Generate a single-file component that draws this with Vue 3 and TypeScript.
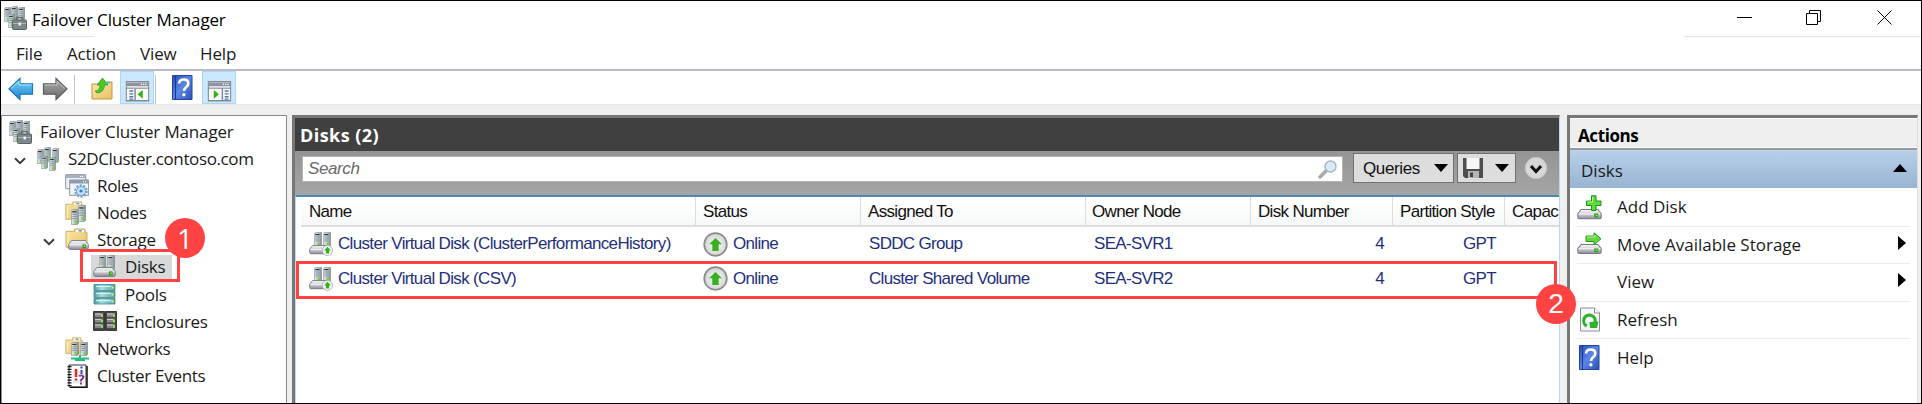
<script setup lang="ts">
interface TreeNode { label: string; icon: string; level: number; open?: boolean; selected?: boolean }
interface DiskRow { name: string; owner: string; assigned: string; disk: number; style: string; marked?: boolean }
interface ActionItem { label: string; icon?: string; submenu?: boolean }

const menus = ['File', 'Action', 'View', 'Help']
const tree: TreeNode[] = [
  { label: 'Failover Cluster Manager', icon: 'manager', level: 0 },
  { label: 'S2DCluster.contoso.com', icon: 'cluster', level: 1, open: true },
  { label: 'Roles', icon: 'roles', level: 2 },
  { label: 'Nodes', icon: 'nodes', level: 2 },
  { label: 'Storage', icon: 'storage', level: 2, open: true },
  { label: 'Disks', icon: 'disks', level: 3, selected: true },
  { label: 'Pools', icon: 'pools', level: 3 },
  { label: 'Enclosures', icon: 'enclosures', level: 3 },
  { label: 'Networks', icon: 'networks', level: 2 },
  { label: 'Cluster Events', icon: 'events', level: 2 },
]
const columns = ['Name', 'Status', 'Assigned To', 'Owner Node', 'Disk Number', 'Partition Style', 'Capac']
const disks: DiskRow[] = [
  { name: 'Cluster Virtual Disk (ClusterPerformanceHistory)', assigned: 'SDDC Group', owner: 'SEA-SVR1', disk: 4, style: 'GPT' },
  { name: 'Cluster Virtual Disk (CSV)', assigned: 'Cluster Shared Volume', owner: 'SEA-SVR2', disk: 4, style: 'GPT', marked: true },
]
const actions: ActionItem[] = [
  { label: 'Add Disk', icon: 'add' },
  { label: 'Move Available Storage', icon: 'move', submenu: true },
  { label: 'View', submenu: true },
  { label: 'Refresh', icon: 'refresh' },
  { label: 'Help', icon: 'help' },
]
</script>

<template>
  <div class="window">
    <svg class="defs" aria-hidden="true">
      <defs>
        <linearGradient id="metal" x1="0" x2="1" y1="0" y2="0"><stop offset="0" stop-color="#e3ebef" /><stop offset=".6" stop-color="#b3c0c6" /><stop offset="1" stop-color="#7b888e" /></linearGradient>
        <linearGradient id="drive" x1="0" x2="0" y1="0" y2="1"><stop offset="0" stop-color="#f7f7fa" /><stop offset=".5" stop-color="#cfcfd8" /><stop offset="1" stop-color="#8a8a94" /></linearGradient>
        <linearGradient id="folder" x1="0" x2="1" y1="0" y2="1"><stop offset="0" stop-color="#fbe9a8" /><stop offset="1" stop-color="#e6c066" /></linearGradient>
        <linearGradient id="blue" x1="0" x2="0" y1="0" y2="1"><stop offset="0" stop-color="#7fd0fa" /><stop offset="1" stop-color="#1a86d0" /></linearGradient>
        <linearGradient id="grey" x1="0" x2="0" y1="0" y2="1"><stop offset="0" stop-color="#aaa" /><stop offset="1" stop-color="#6c6c6c" /></linearGradient>
        <linearGradient id="book" x1="0" x2="1" y1="0" y2="1"><stop offset="0" stop-color="#2450b8" /><stop offset=".5" stop-color="#5b86e4" /><stop offset="1" stop-color="#2c4fb4" /></linearGradient>
        <linearGradient id="teal" x1="0" x2="1" y1="0" y2="0"><stop offset="0" stop-color="#4c9ba2" /><stop offset=".35" stop-color="#a4dde0" /><stop offset="1" stop-color="#57a3aa" /></linearGradient>
        <radialGradient id="disc"><stop offset="0" stop-color="#fff" /><stop offset="1" stop-color="#d2d2d2" /></radialGradient>
      </defs>
      <symbol id="server" viewBox="0 0 8 15" preserveAspectRatio="none">
        <path d="M.4 1.4 2 .4h5.6v13L6.3 14.6H.4z" fill="url(#metal)" stroke="#7b868b" stroke-width=".6" />
        <path d="M1.2 2.6h4.2" stroke="#27383d" stroke-width="1.2" /><path d="M1.2 5h4.2M1.2 7h4.2M1.2 9h4.2" stroke="#7d8c92" stroke-width=".8" />
        <path d="M3.6 11h2.6v2.4H3.6z" fill="#69d52d" />
      </symbol>
      <symbol id="drivebox" viewBox="0 0 24 11" preserveAspectRatio="none">
        <path d="M4 .6h16l3.200 4.200v4q0 1.600-1.800 1.600H2.600Q.8 10.400.8 8.800v-4z" fill="url(#drive)" stroke="#77777f" />
        <path d="M1.500 5.200h21" stroke="#fff" stroke-width=".8" /><path d="M16.500 4.800h4v4.200h-4z" fill="#2f9e22" /><path d="M18 6h1.600v1.600H18z" fill="#92f05c" />
      </symbol>
      <symbol id="folderbox" viewBox="0 0 24 24" preserveAspectRatio="none">
        <path d="M1 3.500h8.500V1H20v3.500h2V20H1z" fill="url(#folder)" stroke="#c8a45c" stroke-width=".9" /><path d="M11 2h8v2h-8z" fill="#fff" /><path d="M13.500 2h3.500v1.700h-3.500z" fill="#4aa3e0" /><path d="M3 5v14" stroke="#fff3c8" />
      </symbol>
      <symbol id="manager" viewBox="0 0 24 24">
        <use href="#server" x="1" y="1" width="7" height="15" /><use href="#server" x="8" y="0" width="7" height="15" /><use href="#server" x="15" y="1" width="7" height="14" /><use href="#server" x="5" y="8" width="7" height="14" />
        <path d="M13.500 14.500v-3h6v3" fill="none" stroke="#666c70" stroke-width="1.500" /><rect x="9.500" y="14" width="14" height="9.500" rx="1" fill="#7c878c" stroke="#5a6468" /><path d="M10 17.500h13" stroke="#aeb8bc" /><path d="M15.500 16.500h2.500v3h-2.500z" fill="#eee" />
      </symbol>
      <symbol id="cluster" viewBox="0 0 24 24">
        <use href="#server" x="1" y="2" width="7" height="15" /><use href="#server" x="8" y="0" width="7" height="15" /><use href="#server" x="16" y="1" width="7" height="15" /><use href="#server" x="5" y="9" width="7" height="13" /><use href="#server" x="13" y="10" width="7" height="14" />
      </symbol>
      <symbol id="roles" viewBox="0 0 24 24">
        <path d="M.7.7h20v14H.7z" fill="#eef1f5" stroke="#8793a2" /><path d="M1 1h19.500v3H1z" fill="#a8b3c1" /><path d="M4.700 6h19v15.300h-19z" fill="#f2f5f8" stroke="#8793a2" /><path d="M5 6h18.500v3.500H5z" fill="#8c9bad" /><path d="M15 2.500h4M18 7.700h4" stroke="#fff" stroke-dasharray="1.200 .8" />
        <circle cx="16" cy="17" r="5.800" fill="none" stroke="#6ca6d2" stroke-width="2" stroke-dasharray="2.200 1.400" /><circle cx="16" cy="17" r="4.500" fill="#c5e1f4" stroke="#6ba3d0" /><circle cx="16" cy="17" r="1.600" fill="#367eb5" />
      </symbol>
      <symbol id="nodes" viewBox="0 0 24 24"><use href="#folderbox" width="20" height="22" /><use href="#server" x="6" y="8" width="8" height="16" /><use href="#server" x="13" y="4" width="8" height="17" /></symbol>
      <symbol id="storage" viewBox="0 0 24 24"><use href="#folderbox" width="24" height="23" /><use href="#drivebox" x="3" y="12" width="21" height="10" /></symbol>
      <symbol id="disks" viewBox="0 0 24 24"><use href="#server" x="6" y="0" width="7" height="15" /><use href="#server" x="14" y="0" width="8" height="15" /><use href="#drivebox" x="0" y="12" width="23" height="10" /></symbol>
      <symbol id="diskup" viewBox="0 0 24 24">
        <use href="#server" x="5" y="0" width="8" height="15" /><use href="#server" x="14" y="0" width="8" height="15" /><use href="#drivebox" x="0" y="13" width="22" height="9.500" /><circle cx="18.500" cy="18.500" r="5" fill="#f7f7f7" stroke="#aaa" stroke-width=".8" /><path d="m18.500 14.800 3.400 3.700h-1.800v3h-3.200v-3h-1.800z" fill="#35ae20" />
      </symbol>
      <symbol id="pools" viewBox="0 0 24 24">
        <g stroke="#43868c" stroke-width=".8" fill="url(#teal)"><path d="M1 1.500h21v6H1zM1 8.500h21v6H1zM1 15.500h21v5.500H1z" /></g><path d="M3 3.500h15M3 10.500h15M3 17.500h15" stroke="#d8f6f6" stroke-width="1.200" /><path d="M18.500 4.500h2M18.500 11.500h2M18.500 18.500h2" stroke="#e5f850" stroke-width="1.800" />
      </symbol>
      <symbol id="enclosures" viewBox="0 0 24 24">
        <path d="M.5 1.500h11v19H.5zM12.500 1.500h11v19h-11z" fill="#484848" stroke="#383838" /><path d="M2 5h8M2 10.500h8M2 16h8M14 5h8M14 10.500h8M14 16h8" stroke="#868686" stroke-width="4" /><path d="M2 4h6M2 9.500h6M2 15h6M14 4h6M14 9.500h6M14 15h6" stroke="#ccc" /><path d="M8 5.500h2M8 11h2M8 16.500h2M20 5.500h2M20 11h2M20 16.500h2" stroke="#9de34c" stroke-width="2.500" />
      </symbol>
      <symbol id="networks" viewBox="0 0 24 24"><use href="#folderbox" width="19" height="20" /><use href="#server" x="6" y="5" width="8" height="14" /><use href="#server" x="15" y="5" width="8" height="14" /><path d="M6 21.500h18M15 18v5" stroke="#2eb980" stroke-width="2" /><path d="M10 22.500h10" stroke="#2eb980" stroke-width="3" /></symbol>
      <symbol id="events" viewBox="0 0 24 24">
        <path d="M4 1h17v22H4z" fill="#fff" stroke="#333" /><path d="M22 2v21.500H5" fill="none" stroke="#111" stroke-width="1.500" /><path d="M4.500 2v21" stroke="#111" stroke-width="4" stroke-dasharray="1.200 1.500" /><path d="M11 5v8M11 14.500v2" stroke="#ee1212" stroke-width="2.400" /><path d="M16.500 2.500v2M16.500 6v4" stroke="#2736d4" stroke-width="2" /><path d="M14 12q3-1.500 4.500.5-.5 2.500-2.500 3.500v1.500M16 18.500v2" fill="none" stroke="#76208a" stroke-width="1.800" /><path d="M8 8h11M8 11h11M8 18h11" stroke="#aaa" stroke-width=".5" />
      </symbol>
      <symbol id="add" viewBox="0 0 25 25"><use href="#drivebox" y="14" width="25" height="10.500" /><path d="M14.500.8h4.500V6h5v4.500h-5v5h-4.500v-5h-5V6h5z" fill="#63d83c" stroke="#169612" /><path d="M15.500 2v5h-5" stroke="#b8f59c" fill="none" /></symbol>
      <symbol id="move" viewBox="0 0 25 25"><use href="#drivebox" y="12" width="25" height="10" /><path d="M9 4h8V.8l7 6-7 6V9.500H9z" fill="#68d441" stroke="#21a01c" /><path d="M10 5h8V3" stroke="#b5ef9b" fill="none" /></symbol>
      <symbol id="refresh" viewBox="0 0 25 25"><path d="M3.500 1h14l5 5v18h-19z" fill="#f5f6fa" stroke="#8d8d93" /><path d="M17.500 1v5h5" fill="#fff" stroke="#8d8d93" /><path d="M9.800 19a5.800 5.800 0 1 1 8.200-3.500" fill="none" stroke="#2eb22c" stroke-width="3.200" /><path d="m12.500 15 9-.5-1.500 6.500h-7z" fill="#2eb22c" /></symbol>
      <symbol id="help" viewBox="0 0 25 25"><path d="M2.500.5h19.500v24H2.500z" fill="url(#book)" stroke="#2443a0" /><path d="M5.500.5v24" stroke="#173996" /><path d="M9 8.500q.3-4 4.700-4 4.600 0 4.600 4 0 2.300-2.300 3.800-2 1.300-2 3.700" fill="none" stroke="#fff" stroke-width="2.700" /><circle cx="13.900" cy="19.800" r="1.700" fill="#fff" /></symbol>
      <symbol id="back" viewBox="0 0 26 24"><path d="M1 12 12 1.500v5.300h12.500v10.400H12v5.300z" fill="url(#blue)" stroke="#1778bb" stroke-width="1.200" /><path d="m3 11.500 8-7.500v4h12.500" fill="none" stroke="#b5e5ff" /></symbol>
      <symbol id="forward" viewBox="0 0 26 24"><path d="M25 12 14 1.500v5.300H1.500v10.400H14v5.300z" fill="url(#grey)" stroke="#5e5e5e" stroke-width="1.200" /><path d="m23 11.500-8-7.500v4H2.500" fill="none" stroke="#c5c5c5" /></symbol>
      <symbol id="up" viewBox="0 0 24 24"><path d="M2 7h7l1.500-2H22v17H2z" fill="url(#folder)" stroke="#c39737" /><path d="M12 5h8v2h-8z" fill="#fff" /><path d="M17 5h3v1.500h-3z" fill="#4aa3e0" /><path d="M5 14q5 0 5-6H7l5.500-7L18 8h-3.500Q14 15.500 7 16z" fill="#49cb26" stroke="#299117" stroke-width=".7" /></symbol>
      <symbol id="pane" viewBox="0 0 25 22"><path d="M.7.7h23.600v20H.7z" fill="#f9f9fa" stroke="#858b94" stroke-width="1.400" /><path d="M1.500 3.500h22" stroke="#8d949f" stroke-width="4" /><path d="M16 3.500h6" stroke="#fff" stroke-width="1.500" stroke-dasharray="1.300 1" /><path d="M1 7.500h23" stroke="#707985" /></symbol>
      <symbol id="treepane" viewBox="0 0 25 22"><use href="#pane" width="25" height="22" /><path d="M10 8v13" stroke="#818791" stroke-width="1.500" /><path d="M4 10.500h4M4 13.500h4M4 16.500h4M4 19h4" stroke="#4777ad" stroke-width="1.400" /><path d="M18 9.500v9L12.500 14z" fill="#35b21b" /></symbol>
      <symbol id="actionpane" viewBox="0 0 25 22"><use href="#pane" width="25" height="22" /><path d="M15.500 8v13" stroke="#818791" stroke-width="1.500" /><path d="M18 10.500h4M18 13.500h4M18 16.500h4M18 19h4" stroke="#4777ad" stroke-width="1.400" /><path d="M6.500 9.500v9l5.500-4.500z" fill="#35b21b" /></symbol>
    </svg>

    <header class="titlebar">
      <svg class="icon"><use href="#manager" /></svg>
      <span class="title">Failover Cluster Manager</span>
      <svg class="controls" viewBox="0 0 160 20" fill="none" stroke="#000"><path d="M1 10.500h15" /><path d="M70.500 6.500h11v11h-11zM73.500 6V3.500h11v11H82M141.500 3.500l14 14M155.500 3.500l-14 14" /></svg>
    </header>
    <div class="rules"><i></i><i></i></div>
    <nav class="menubar"><span v-for="m in menus" :key="m">{{ m }}</span></nav>
    <div class="toolbar">
      <svg class="tool arrow"><use href="#back" /></svg>
      <svg class="tool arrow next"><use href="#forward" /></svg>
      <i class="divider"></i>
      <svg class="tool folder"><use href="#up" /></svg>
      <span class="toggle"><svg><use href="#treepane" /></svg></span>
      <i class="divider tight"></i>
      <svg class="tool book"><use href="#help" /></svg>
      <span class="toggle"><svg><use href="#actionpane" /></svg></span>
    </div>

    <main class="body">
      <aside class="tree">
        <div v-for="n in tree" :key="n.label" class="node" :class="['level' + n.level, { selected: n.selected }]">
          <span class="twist"><svg v-if="n.open" viewBox="0 0 12 8"><path d="m1 1.200 5 5 5-5" fill="none" stroke="#3c3c3c" stroke-width="2" /></svg></span>
          <span class="entry"><svg class="icon"><use :href="'#' + n.icon" /></svg><span class="label">{{ n.label }}</span></span>
          <template v-if="n.selected"><span class="marker"></span><span class="badge first">1</span></template>
        </div>
      </aside>

      <section class="content">
        <h2>Disks (2)</h2>
        <div class="searchbar">
          <div class="search"><span>Search</span><svg viewBox="0 0 20 20"><path d="m2 18 6-6" stroke="#aaa" stroke-width="3.500" stroke-linecap="round" /><circle cx="12.500" cy="7.500" r="5.500" fill="#d7ecf9" stroke="#a9b7c2" stroke-width="1.500" /></svg></div>
          <button class="queries">Queries<i class="caret"></i></button>
          <button class="save"><svg viewBox="0 0 20 20"><path d="M0 0h20v20H2l-2-2z" fill="#4d4d4d" /><path d="M3.500 0h13v11h-13z" fill="#f6f6f6" /><path d="M5 13h11v7H5z" fill="#b5b5b5" /><path d="M7 14.500h3V19H7z" fill="#444" /></svg><i class="caret"></i></button>
          <svg class="expand" viewBox="0 0 24 24"><circle cx="12" cy="12" r="10.700" fill="#d7d7d7" stroke="#c4c4c4" /><path d="m7 10 5 5.500 5-5.500" fill="none" stroke="#111" stroke-width="3" /></svg>
        </div>
        <div class="table">
          <div class="row head"><span v-for="c in columns" :key="c">{{ c }}</span></div>
          <div v-for="d in disks" :key="d.name" class="row">
            <span class="name"><svg class="icon"><use href="#diskup" /></svg>{{ d.name }}</span>
            <span class="status"><svg viewBox="0 0 25 25"><circle cx="12.500" cy="12.500" r="11.300" fill="url(#disc)" stroke="#8b8b8b" stroke-width="1.700" /><path d="m12.500 6 6.500 6.300h-3.300V19H9.300v-6.700H6z" fill="#38b01f" /></svg>Online</span>
            <span>{{ d.assigned }}</span><span>{{ d.owner }}</span><span class="num">{{ d.disk }}</span><span class="num style">{{ d.style }}</span><span></span>
            <template v-if="d.marked"><i class="marker"></i><i class="badge second">2</i></template>
          </div>
        </div>
      </section>

      <aside class="actions">
        <h3>Actions</h3>
        <div class="group">Disks<svg viewBox="0 0 14 8"><path d="M0 8 7 0l7 8z" /></svg></div>
        <ul>
          <li v-for="a in actions" :key="a.label">
            <span class="slot"><svg v-if="a.icon"><use :href="'#' + a.icon" /></svg></span>{{ a.label }}
            <svg v-if="a.submenu" class="sub" viewBox="0 0 8 14"><path d="M0 0l8 7-8 7z" /></svg>
          </li>
        </ul>
      </aside>
    </main>
  </div>
</template>

<style>
body { margin: 0; overflow: hidden; }
</style>
<style scoped>
.window { box-sizing: border-box; width: 1922px; height: 404px; border: 1px solid #000; background: #fff; display: flex; flex-direction: column; overflow: hidden; font: 17px/24px "Open Sans", "Noto Sans", sans-serif; color: #1a1a1a; }
.window * { box-sizing: border-box; }
.defs { position: absolute; width: 0; height: 0; }
.icon { width: 24px; height: 24px; flex: none; }
.titlebar { height: 35px; flex: none; display: flex; align-items: flex-start; padding: 5px 25px 0 2px; }
.title { margin: 2px 0 0 5px; color: #000; letter-spacing: -.15px; }
.controls { width: 160px; height: 20px; margin: 1px 0 0 auto; }
.rules { display: flex; justify-content: space-between; height: 1px; flex: none; }
.rules i { width: 93px; background: #e4e4e4; }
.rules i:last-child { width: 237px; }
.menubar { height: 34px; flex: none; border-bottom: 2px solid #bcbcc2; padding: 5px 0 0 15px; display: flex; }
.menubar span { width: 73px; letter-spacing: -.15px; }
.menubar span:first-child { width: 51px; }
.menubar span:nth-child(3) { width: 60px; }
.toolbar { height: 33px; flex: none; display: flex; align-items: center; padding-left: 7px; }
.tool.arrow { width: 26px; height: 24px; margin-top: 3px; }
.tool.next { margin-left: 8px; }
.tool.folder { width: 24px; height: 24px; margin: 2px 6px 0 15px; }
.tool.book { width: 25px; height: 25px; margin: 0 7px 0 14px; }
.divider { width: 1px; height: 29px; background: #c2c2c2; margin: 3px 0 0 6px; }
.divider.tight { margin-left: 1px; }
.toggle { width: 34px; height: 33px; background: #cce8ff; border: 1px solid #a9d7fa; padding: 9px 0 0 4px; }
.toggle svg { display: block; width: 25px; height: 21px; }
.body { flex: 1; display: flex; min-height: 0; background: #efefef; padding-top: 10px; border-top: 1px solid #e6e6e6; }

.tree { width: 286px; flex: none; background: #fff; border: solid #868b94; border-width: 1px 1px 0 1px; padding-top: 4px; }
.node { height: 27.1px; display: flex; position: relative; }
.twist { width: 21px; display: flex; justify-content: flex-end; flex: none; }
.twist svg { width: 12px; height: 8px; margin-top: 10px; }
.entry { display: flex; }
.entry .label { padding-left: 8px; letter-spacing: -.3px; }
.level0 .twist { width: 6px; padding: 0; }
.level0 .label { letter-spacing: -.15px; }
.level1 .twist { width: 34px; padding-right: 10px; }
.level1 .label { letter-spacing: -.38px; }
.level2 .twist { width: 63px; padding-right: 10px; }
.level3 .twist { width: 89px; }
.level3 .entry { height: 25px; padding: 0 7px 0 2px; }
.selected .entry { background: #d9d9d9; width: 81px; }
.node .marker { position: absolute; left: 78px; top: -6px; width: 100px; height: 33px; border: 3px solid #ff4242; }
.badge { position: absolute; width: 40px; height: 40px; border-radius: 50%; background: #ff4242; color: #fff; font: 28px/40px "Liberation Sans", Arial, sans-serif; letter-spacing: 0; text-align: center; z-index: 3; }
.first { left: 163px; top: -37px; font-family: "Open Sans", sans-serif; }

.content { width: 1268px; flex: none; margin-left: 5px; border: solid #777; border-width: 3px 0 0 3px; border-right: 1px solid #b9d8ec; display: flex; flex-direction: column; background: #fff; }
h2 { margin: 0; height: 33px; flex: none; background: #404040; color: #fff; font: bold 18px/34px "Open Sans", sans-serif; letter-spacing: .45px; padding-left: 5px; }
.searchbar { height: 44px; flex: none; background: linear-gradient(#949494, #a5a5a5); display: flex; padding: 2px 12px 0 7px; font-family: "Liberation Sans", sans-serif; }
.search { width: 1041px; height: 26px; margin: 3px 10px 0 0; background: #fff; border: 1px solid #b4b4bd; display: flex; flex: none; justify-content: space-between; padding: 0 4px 0 5px; font-style: italic; color: #6a6a6a; letter-spacing: -.4px; }
.search svg { width: 20px; height: 20px; margin-top: 2px; }
button { height: 30px; flex: none; margin: 0 3px 0 0; border: 1px solid #707070; background: #ddd; font: 17px/27px "Liberation Sans", sans-serif; letter-spacing: -.36px; display: flex; align-items: center; justify-content: space-between; color: #111; }
.queries { width: 101px; padding: 0 5px 0 9px; }
.save { width: 59px; padding: 0 6px 0 5px; }
.save svg { width: 20px; height: 20px; }
.caret { border: 7px solid transparent; border-top: 8px solid #000; border-bottom: 0; }
.expand { width: 24px; height: 24px; flex: none; margin: 3px 0 0 5px; }
.table { flex: 1; border-top: 2px solid #4b8ab8; border-left: 1px solid #b9d8ec; padding-left: 5px; font-family: "Liberation Sans", Arial, sans-serif; letter-spacing: -.68px; color: #1e307d; white-space: nowrap; }
.row { display: grid; grid-template-columns: 395px 165px 225px 165px 142px 112px 53px; height: 34.500px; position: relative; align-items: center; }
.row > span { padding-left: 8px; display: flex; align-items: center; }
.row > .name { padding-left: 8px; letter-spacing: -.66px; }
.name .icon { margin: 0 5px 0 0; }
.row > .status { padding-left: 7px; }
.status svg { width: 25px; height: 25px; margin-right: 5px; }
.row > .num { justify-content: flex-end; padding-right: 9px; }
.row.head { height: 30px; color: #111; background: linear-gradient(#fff 20%, #f6f7f8); border-bottom: 2px solid #dcdcdc; }
.row.head span { height: 100%; padding: 1px 0 0 7px; border-right: 1px solid #dcdcdc; }
.row.head span:first-child { padding-left: 8px; }
.row.head span:nth-child(4) { padding-left: 6px; }
.row.head span:last-child { border: 0; padding-left: 7px; letter-spacing: -.6px; }
.row .marker { position: absolute; left: -5px; top: -1px; width: 1261px; height: 38px; border: 3px solid #ff4242; }
.second { left: 1235px; top: 22px; }

.actions { width: 351px; flex: none; margin-left: 7px; background: #fff; border: solid #777; border-width: 3px 1px 0 3px; border-right-color: #ddd; }
h3 { margin: 0; height: 32px; background: #efefef; border: solid #9a9a9a; border-width: 0 0 2px; box-shadow: inset 0 1px #fff, inset 0 -1px #fafafa; font: bold 17px/35px "Open Sans", sans-serif; letter-spacing: -.4px; color: #000; padding-left: 8px; }
.group { height: 38px; background: linear-gradient(#b9d1ea, #98b4d2); display: flex; justify-content: space-between; align-items: center; padding: 3px 10px 0 11px; }
.group svg { width: 14px; height: 8px; margin-bottom: 5px; }
.actions ul { list-style: none; margin: 1px 7px 0 7px; padding: 0; }
.actions li { height: 37.500px; display: flex; align-items: center; border-bottom: 1px solid #ececec; padding-right: 4px; }
.actions li:last-child { border: 0; }
.slot { width: 40px; height: 25px; }
.slot svg { width: 25px; height: 25px; display: block; }
.sub { width: 8px; height: 14px; margin: -4px 0 0 auto; }
</style>
